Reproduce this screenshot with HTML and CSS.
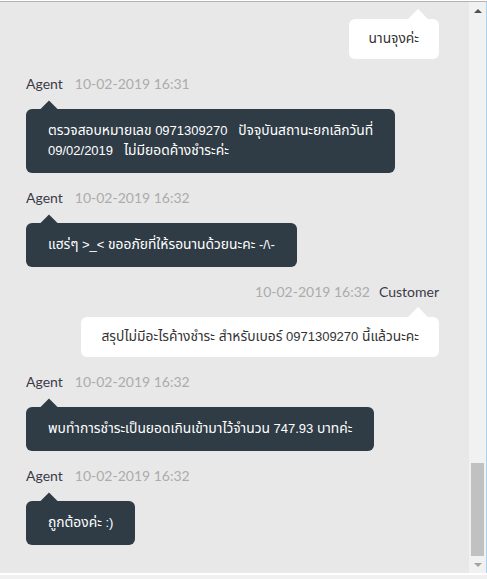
FILE: index.html
```html
<!DOCTYPE html>
<html lang="th">
<head>
  <meta charset="UTF-8">
  <title>Chat</title>
  <link rel="stylesheet" href="styles.css">
</head>
<body>
  <div class="frame">
    <div class="chat">
      <!-- ข้อความ -->
      <div class="messages">
        <div class="msg customer">
          <div class="bubble"><span class="th">นานจุงค่ะ</span></div>
        </div>

        <div class="msg agent">
          <div class="meta"><span class="name">Agent</span><span class="time">10-02-2019 16:31</span></div>
          <div class="bubble"><span class="th">ตรวจสอบหมายเลข</span> 0971309270   <span class="th">ปัจจุบันสถานะยกเลิกวันที่</span><br>09/02/2019   <span class="th">ไม่มียอดค้างชำระค่ะ</span></div>
        </div>

        <div class="msg agent">
          <div class="meta"><span class="name">Agent</span><span class="time">10-02-2019 16:32</span></div>
          <div class="bubble"><span class="th">แฮร่ๆ</span> &gt;_&lt; <span class="th">ขออภัยที่ให้รอนานด้วยนะคะ</span> -/\-</div>
        </div>

        <div class="msg customer">
          <div class="meta"><span class="time">10-02-2019 16:32</span><span class="name">Customer</span></div>
          <div class="bubble"><span class="th">สรุปไม่มีอะไรค้างชำระ สำหรับเบอร์</span> 0971309270 <span class="th">นี้แล้วนะคะ</span></div>
        </div>

        <div class="msg agent">
          <div class="meta"><span class="name">Agent</span><span class="time">10-02-2019 16:32</span></div>
          <div class="bubble"><span class="th">พบทำการชำระเป็นยอดเกินเข้ามาไว้จำนวน</span> 747.93 <span class="th">บาทค่ะ</span></div>
        </div>

        <div class="msg agent">
          <div class="meta"><span class="name">Agent</span><span class="time">10-02-2019 16:32</span></div>
          <div class="bubble"><span class="th">ถูกต้องค่ะ</span> :)</div>
        </div>
      </div>

      <!-- スクロールバー -->
      <div class="scrollbar">
        <div class="arrow arrow-up"></div>
        <div class="track"><div class="thumb"></div></div>
        <div class="arrow arrow-down"></div>
      </div>
    </div>
    <div class="footer"></div>
  </div>
</body>
</html>
```

FILE: styles.css
```css
/* 全体 */
body {
  margin: 0;
  background: #ffffff;
  font-family: 'Lato', 'Liberation Sans', sans-serif;
}

.frame {
  padding-top: 1px;
}

/* チャット枠 */
.chat {
  display: flex;
  height: 571px;
  border-top: 1px solid #b3b3b3;
  border-right: 1px solid #a9d4f0;
  background: #e8e8e8;
}

.messages {
  flex: 1;
  display: flex;
  flex-direction: column;
  padding: 17px 30px 0 26px;
  overflow: hidden;
}

/* メッセージ */
.msg {
  display: flex;
  flex-direction: column;
  margin-bottom: 15px;
}

.msg.agent {
  align-items: flex-start;
}

.msg.customer {
  align-items: flex-end;
}

.meta {
  display: flex;
  height: 20px;
  line-height: 20px;
  font-size: 14px;
  margin-bottom: 15px;
}

.name {
  color: #3a3a48;
}

.time {
  color: #acacac;
}

.agent .meta {
  gap: 12px;
}

.customer .meta {
  gap: 9px;
}

/* 吹き出し */
.bubble {
  position: relative;
  max-width: 328px;
  min-height: 20px;
  border-radius: 6px;
  font-family: 'Liberation Sans', Tahoma, 'Noto Sans Thai', 'Noto Sans', sans-serif;
  font-size: 13px;
  line-height: 20px;
  white-space: pre-wrap;
}

/* タイ語部分は少し大きめ */
.th {
  font-size: 13.8px;
  line-height: 14px;
}

.bubble::before {
  content: "";
  position: absolute;
  transform: rotate(45deg);
}

.agent .bubble {
  padding: 12px 22px;
  background: #2f3c46;
  color: #ffffff;
}

.agent .bubble::before {
  top: -6px;
  left: 17px;
  width: 12px;
  height: 12px;
  background: #2f3c46;
}

.customer .bubble {
  padding: 10px 20px;
  background: #ffffff;
  color: #333333;
}

.customer .bubble::before {
  top: -7px;
  right: 14px;
  width: 14px;
  height: 14px;
  background: #ffffff;
}

/* スクロールバー */
.scrollbar {
  width: 17px;
  display: flex;
  flex-direction: column;
  background: #f1f1f1;
}

.arrow {
  height: 17px;
  display: flex;
  align-items: center;
  justify-content: center;
}

.arrow::after {
  content: "";
  border-left: 4px solid transparent;
  border-right: 4px solid transparent;
}

.arrow-up::after {
  border-bottom: 4px solid #505050;
}

.arrow-down::after {
  border-top: 4px solid #a3a3a3;
}

.track {
  flex: 1;
  display: flex;
  flex-direction: column;
  justify-content: flex-end;
  padding: 0 2px;
}

.thumb {
  height: 93px;
  background: #c1c1c1;
}

/* 下部 */
.footer {
  margin-top: 2px;
  height: 10px;
  background: #f0f0f0;
}
```
